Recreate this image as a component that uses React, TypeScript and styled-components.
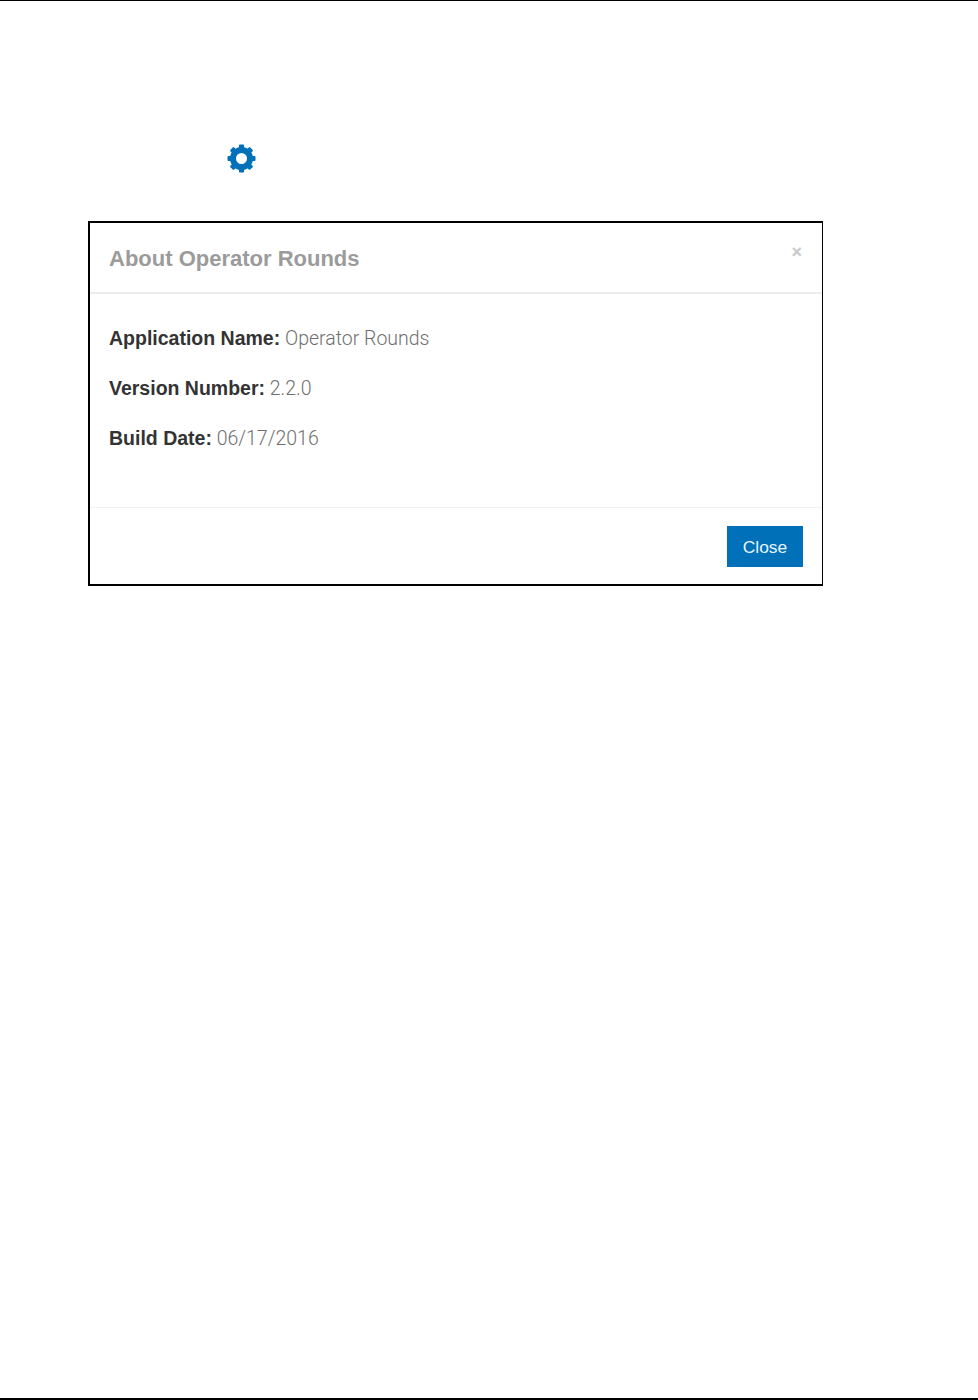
import React from 'react'
import styled, { createGlobalStyle } from 'styled-components'

const Global = createGlobalStyle`
  html, body {
    margin: 0;
    padding: 0;
    background: #fff;
  }
`

const Page = styled.div`
  box-sizing: border-box;
  height: 1400px;
  border-top: 1px solid #000;
  border-bottom: 2px solid #000;
  padding: 143px 155px 0 88px;
  font-family: 'Liberation Sans', Arial, sans-serif;
`

const IconRow = styled.div`
  display: flex;
  padding-left: 139px;
  height: 77px;
  color: #0071b8;
`

const Dialog = styled.section`
  box-sizing: border-box;
  width: 735px;
  height: 365px;
  display: flex;
  flex-direction: column;
  border: 2px solid #000;
  border-right-width: 1px;
`

const Header = styled.header`
  box-sizing: border-box;
  height: 71px;
  display: flex;
  justify-content: space-between;
  align-items: flex-start;
  padding: 0 19px;
  border-bottom: 2px solid #ececec;
`

const Title = styled.h2`
  margin: 22px 0 0;
  font-size: 22px;
  line-height: 28px;
  font-weight: 700;
  color: #9b9b9b;
`

const Dismiss = styled.span`
  margin: 19px 1px 0 0;
  font-size: 18px;
  line-height: 20px;
  font-weight: 700;
  color: #c8c8c8;
`

const Body = styled.div`
  flex: 1;
  display: flex;
  flex-direction: column;
  gap: 25px;
  padding: 32px 19px 0;
`

const Line = styled.p`
  margin: 0;
  font-family: Roboto, 'Liberation Sans', sans-serif;
  font-size: 19.5px;
  line-height: 24px;
  font-weight: 300;
  color: #6f6f6f;
`

const Label = styled.strong`
  font-family: 'Liberation Sans', Arial, sans-serif;
  font-weight: 700;
  color: #333;
`

const Footer = styled.footer`
  box-sizing: border-box;
  height: 77px;
  display: flex;
  justify-content: flex-end;
  padding: 18px 19px 0;
  border-top: 1px solid #f0f0f0;
`

const CloseButton = styled.button`
  width: 76px;
  height: 41px;
  border: 0;
  padding: 1px 0 0;
  background: #0071b8;
  color: #e8f4fb;
  font-family: inherit;
  font-size: 17.4px;
`

const TEETH = [0, 45, 90, 135, 180, 225, 270, 315]

const Gear = () => (
  <svg width="29" height="29" viewBox="-14.5 -14.5 29 29" fill="currentColor">
    <circle r="8.5" fill="none" stroke="currentColor" strokeWidth="6" />
    {TEETH.map((a) => (
      <rect key={a} x="-2.6" y="-14" width="5.2" height="5" rx="1" transform={`rotate(${a})`} />
    ))}
  </svg>
)

export default function App() {
  return (
    <>
      <Global />
      <Page>
        <IconRow>
          <Gear />
        </IconRow>
        <Dialog>
          <Header>
            <Title>About Operator Rounds</Title>
            <Dismiss>×</Dismiss>
          </Header>
          <Body>
            <Line><Label>Application Name:</Label> Operator Rounds</Line>
            <Line><Label>Version Number:</Label> 2.2.0</Line>
            <Line><Label>Build Date:</Label> 06/17/2016</Line>
          </Body>
          <Footer>
            <CloseButton>Close</CloseButton>
          </Footer>
        </Dialog>
      </Page>
    </>
  )
}
